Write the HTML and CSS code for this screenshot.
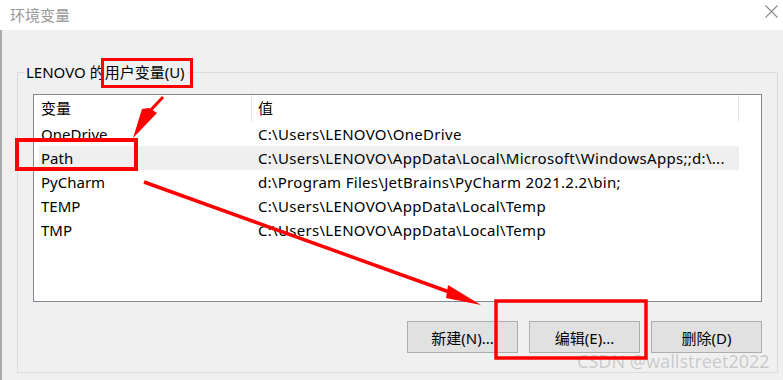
FILE: index.html
```html
<!DOCTYPE html>
<html lang="zh-CN">
<head>
    <meta charset="UTF-8">
    <title>环境变量</title>
    <link rel="stylesheet" href="styles.css">
</head>
<body>

<div class="titlebar">
    <span class="title">环境变量</span>
    <svg class="close" width="13" height="13" viewBox="0 0 13 13">
        <path d="M0.5 0.5 L12.5 12.5 M12.5 0.5 L0.5 12.5" stroke="#8a8a8a" stroke-width="1.1" fill="none"/>
    </svg>
</div>

<div class="window-body">
    <!-- 用户变量 -->
    <div class="group">
        <div class="group-title">LENOVO 的用户变量(U)</div>

        <div class="list">
            <div class="list-head">
                <div class="col-name">变量</div>
                <div class="col-value">值</div>
            </div>
            <div class="row"><div class="cell-name">OneDrive</div><div class="cell-value">C:\Users\LENOVO\OneDrive</div></div>
            <div class="row selected"><div class="cell-name">Path</div><div class="cell-value">C:\Users\LENOVO\AppData\Local\Microsoft\WindowsApps;;d:\...</div></div>
            <div class="row"><div class="cell-name">PyCharm</div><div class="cell-value">d:\Program Files\JetBrains\PyCharm 2021.2.2\bin;</div></div>
            <div class="row"><div class="cell-name">TEMP</div><div class="cell-value">C:\Users\LENOVO\AppData\Local\Temp</div></div>
            <div class="row"><div class="cell-name">TMP</div><div class="cell-value">C:\Users\LENOVO\AppData\Local\Temp</div></div>
        </div>

        <div class="buttons">
            <button>新建(N)...</button>
            <button>编辑(E)...</button>
            <button>删除(D)</button>
        </div>
    </div>
</div>

<div class="watermark">CSDN @wallstreet2022</div>

<!-- 标注 -->
<svg class="marks" width="783" height="380" viewBox="0 0 783 380">
    <g fill="none" stroke="#ff0000">
        <rect x="102.5" y="59.5" width="89" height="27" stroke-width="3"/>
        <rect x="17" y="140" width="119" height="29" stroke-width="4"/>
        <rect x="496" y="301" width="150" height="57" stroke-width="3.5"/>
        <line x1="163" y1="97" x2="149" y2="112" stroke-width="3"/>
        <line x1="144" y1="182" x2="452" y2="293" stroke-width="3.5"/>
    </g>
    <g fill="#ff0000">
        <polygon points="133,138 142,109 149,108 157,113"/>
        <polygon points="448,285 446,298 481,305"/>
    </g>
</svg>

</body>
</html>
```

FILE: styles.css
```css
body {
    margin: 0;
    width: 783px;
    height: 380px;
    overflow: hidden;
    position: relative;
    font-family: "Noto Sans", "Noto Sans CJK SC", sans-serif;
    font-size: 15px;
    color: #000;
    background-color: #f0f0f0;
}
.titlebar {
    height: 30px;
    background-color: #fff;
    display: flex;
    align-items: center;
    justify-content: space-between;
    padding: 0 5px 0 10px;
}
.title {
    color: #999;
    margin-top: -2px;
}
.close {
    margin-top: -7px;
}
.window-body {
    height: 350px;
    border-left: 2px solid #ababab;
    padding: 42px 0 0 15px;
    box-sizing: border-box;
}
.group {
    width: 761px;
    border: 1px solid #dcdcdc;
    padding: 0 15px 19px 15px;
    box-sizing: border-box;
}
.group-title {
    display: table;
    margin: -11px 0 0 -9px;
    padding: 0 2px;
    line-height: 20px;
    background-color: #f0f0f0;
}
.list {
    margin-top: 12px;
    height: 208px;
    border: 1px solid #828790;
    background-color: #fff;
    box-sizing: border-box;
}
.list-head {
    display: flex;
    height: 27px;
    line-height: 27px;
}
.col-name {
    width: 218px;
    padding-left: 7px;
    border-right: 1px solid #e5e5e5;
    box-sizing: border-box;
}
.col-value {
    width: 487px;
    padding-left: 6px;
    border-right: 1px solid #e5e5e5;
    box-sizing: border-box;
}
.row {
    display: flex;
    margin-left: 5px;
    width: 700px;
    height: 24px;
    line-height: 24px;
    white-space: nowrap;
}
.row.selected {
    background-color: #efefef;
}
.cell-name {
    width: 212px;
    padding-left: 2px;
    box-sizing: border-box;
}
.cell-value {
    padding-left: 7px;
    letter-spacing: 0.3px;
}
.buttons {
    display: flex;
    justify-content: flex-end;
    gap: 11px;
    margin-top: 19px;
}
.buttons button {
    width: 111px;
    height: 32px;
    font-family: inherit;
    font-size: 15px;
    color: #000;
    background-color: #e1e1e1;
    border: 1px solid #adadad;
    padding: 0;
}
.watermark {
    position: absolute;
    left: 577px;
    top: 349px;
    font-size: 18px;
    line-height: 24px;
    color: #cacaca;
    text-shadow: 0 0 1px #fff;
}
.marks {
    position: absolute;
    left: 0;
    top: 0;
    pointer-events: none;
}
```
